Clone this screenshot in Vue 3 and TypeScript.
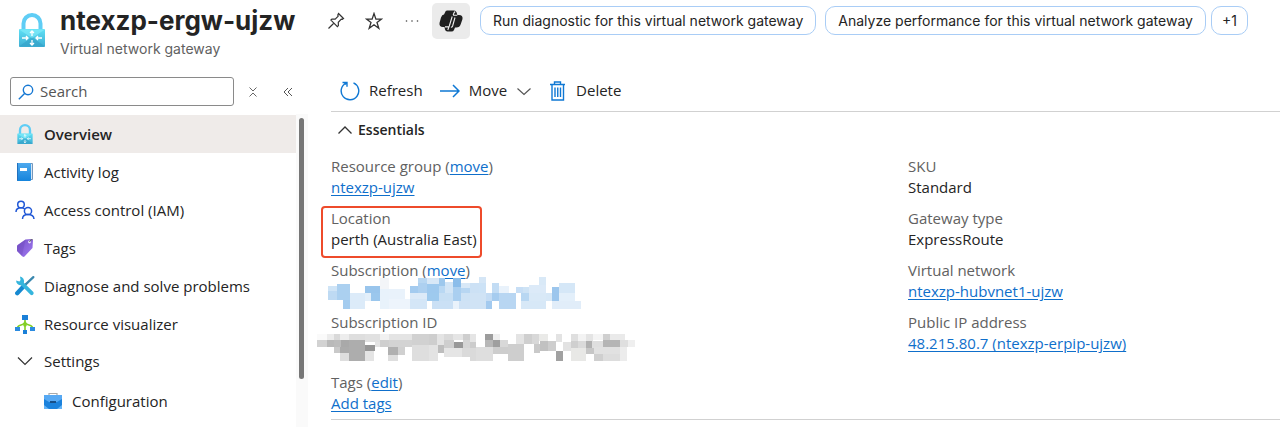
<script setup lang="ts">
import { ref } from 'vue'

type IconName = 'lock' | 'log' | 'people' | 'tag' | 'tools' | 'tree'
type Block = [x: number, y: number, w: number, h: number, fill: string]

const query = ref('')
const navItems: { icon: IconName; label: string }[] = [
  { icon: 'lock', label: 'Overview' },
  { icon: 'log', label: 'Activity log' },
  { icon: 'people', label: 'Access control (IAM)' },
  { icon: 'tag', label: 'Tags' },
  { icon: 'tools', label: 'Diagnose and solve problems' },
  { icon: 'tree', label: 'Resource visualizer' },
]

const details: { label: string; value: string; link?: boolean }[] = [
  { label: 'SKU', value: 'Standard' },
  { label: 'Gateway type', value: 'ExpressRoute' },
  { label: 'Virtual network', value: 'ntexzp-hubvnet1-ujzw', link: true },
  { label: 'Public IP address', value: '48.215.80.7 (ntexzp-erpip-ujzw)', link: true },
]

// Redaction mosaics, three units per pixel
const blueBlocks: Block[] = [
  [54, 78, 28, 15, '#cfe4f6'], [54, 93, 28, 27, '#bedaf3'], [82, 72, 38, 48, '#abd0f0'], [99, 120, 21, 27, '#a4ccef'],
  [120, 99, 46, 48, '#dcebf9'], [165, 78, 45, 21, '#99c5ec'], [182, 99, 28, 24, '#9bc7ed'], [165, 99, 17, 24, '#e3effa'],
  [210, 54, 27, 33, '#f3f5f8'], [210, 87, 27, 60, '#e8f2fb'], [237, 87, 47, 30, '#e9f2fb'], [237, 117, 63, 30, '#edf4fc'],
  [300, 78, 24, 21, '#a4cbef'], [324, 54, 27, 16, '#b8d7f2'], [324, 70, 27, 29, '#add0f0'], [351, 54, 36, 18, '#d8e8f7'],
  [351, 72, 36, 27, '#9ec9ee'], [387, 54, 18, 24, '#9dc8ed'], [387, 78, 18, 21, '#b9d8f3'], [405, 66, 24, 33, '#d2e5f6'],
  [429, 54, 24, 27, '#8bbdea'], [429, 81, 24, 42, '#aacff0'], [453, 69, 27, 15, '#d8e8f7'], [453, 84, 27, 15, '#b7d6f2'],
  [300, 99, 66, 18, '#dceaf8'], [300, 117, 51, 30, '#d4e6f7'], [351, 99, 36, 24, '#9ecaee'], [366, 123, 63, 24, '#cae0f5'],
  [387, 99, 42, 24, '#c7dff4'], [429, 123, 18, 24, '#e9f2fb'], [447, 123, 33, 24, '#cfe2f5'], [453, 99, 27, 24, '#cde2f5'],
  [480, 69, 27, 30, '#cce1f5'], [507, 51, 21, 18, '#d5e6f6'], [507, 69, 21, 30, '#cce2f6'], [480, 99, 48, 48, '#d0e3f5'],
  [528, 99, 18, 24, '#c4dcf4'], [546, 69, 21, 30, '#c2dcf4'], [546, 99, 21, 24, '#a6ccef'], [528, 123, 18, 24, '#a3caef'],
  [567, 78, 30, 21, '#e9f2fb'], [567, 99, 51, 48, '#b8d6f2'], [618, 81, 21, 18, '#c7def5'], [639, 81, 18, 18, '#cee3f5'],
  [633, 99, 24, 24, '#b8d7f2'], [657, 75, 51, 24, '#dceaf8'], [687, 51, 21, 24, '#d9e9f7'], [657, 99, 51, 24, '#d9e9f7'],
  [633, 123, 75, 24, '#d7e8f7'], [708, 99, 18, 24, '#d7e8f7'], [726, 81, 21, 45, '#9cc6ed'], [747, 69, 48, 30, '#d5e7f7'],
  [747, 99, 48, 24, '#e3effa'], [726, 123, 87, 24, '#e1edf9'],
]

const grayBlocks: Block[] = [
  [21, 222, 30, 18, '#fafafa'], [51, 222, 21, 18, '#ececec'], [72, 222, 18, 18, '#d9d9d9'], [90, 222, 27, 18, '#ededed'],
  [117, 222, 48, 18, '#dedede'], [165, 222, 45, 24, '#e1e1e1'], [210, 222, 27, 18, '#f1f1f1'], [237, 222, 69, 18, '#e4e4e4'],
  [306, 222, 51, 33, '#d1d1d1'], [357, 222, 24, 33, '#cecece'], [381, 222, 21, 33, '#e4e4e4'], [402, 222, 27, 18, '#dadada'],
  [429, 222, 30, 18, '#e5e5e5'], [459, 222, 21, 18, '#cecece'], [480, 222, 18, 24, '#e5e5e5'],
  [21, 240, 30, 21, '#d2d2d2'], [51, 240, 21, 21, '#b9b9b9'], [72, 240, 21, 21, '#bcbcbc'], [93, 240, 24, 21, '#a9a9a9'],
  [117, 240, 48, 63, '#adadad'], [72, 261, 18, 18, '#c9c9c9'], [90, 261, 27, 18, '#ababab'], [90, 279, 27, 24, '#dedede'],
  [165, 255, 30, 18, '#969696'], [165, 273, 27, 30, '#e4e4e4'], [195, 246, 27, 15, '#e4e4e4'], [210, 240, 27, 21, '#cfcfcf'],
  [237, 240, 69, 21, '#d3d3d3'], [234, 261, 30, 24, '#b0b0b0'], [264, 261, 21, 24, '#d0d0d0'], [234, 285, 30, 18, '#dedede'],
  [306, 255, 51, 48, '#dedede'], [357, 255, 27, 48, '#e3e3e3'], [384, 255, 18, 24, '#bdbdbd'], [402, 240, 30, 24, '#cecece'],
  [432, 246, 27, 18, '#989898'], [459, 240, 21, 24, '#d5d5d5'], [402, 264, 54, 27, '#e5e5e5'], [456, 264, 24, 27, '#dadada'],
  [480, 246, 18, 18, '#cccccc'], [480, 264, 18, 39, '#dadada'], [498, 261, 51, 42, '#dedede'],
  [525, 222, 24, 18, '#9c9c9c'], [549, 222, 21, 18, '#efefef'], [525, 240, 24, 21, '#b7b7b7'], [549, 240, 21, 21, '#9f9f9f'],
  [570, 240, 24, 21, '#d8d8d8'], [549, 261, 45, 21, '#cdcdcd'], [594, 252, 48, 51, '#cecece'], [618, 222, 24, 30, '#e4e4e4'],
  [642, 222, 24, 30, '#cfcfcf'], [666, 222, 21, 30, '#d8d8d8'], [687, 222, 27, 21, '#eaeae8'], [672, 252, 18, 27, '#c9c9c9'],
  [690, 243, 24, 30, '#c1c1c1'], [714, 243, 24, 30, '#cdcdcd'], [738, 222, 18, 24, '#e3e3e3'], [738, 273, 21, 30, '#a1a1a1'],
  [759, 246, 24, 27, '#e2e2e2'], [783, 222, 21, 21, '#dfdfdf'], [804, 222, 24, 21, '#f3f3f3'], [828, 222, 21, 21, '#e4e4e4'],
  [849, 222, 30, 18, '#f4f4f4'], [783, 243, 21, 21, '#cfcfcf'], [804, 243, 24, 21, '#dadada'], [828, 243, 18, 21, '#b1b1b1'],
  [846, 243, 33, 21, '#dfdfdf'], [783, 264, 45, 39, '#e8e8e6'], [828, 264, 24, 18, '#c6c6c6'], [879, 222, 21, 18, '#cfcfcf'],
  [900, 222, 45, 18, '#eaeaea'], [879, 240, 51, 21, '#b5b5b5'], [930, 240, 24, 21, '#dfdfdf'], [954, 240, 21, 21, '#efefef'],
  [852, 261, 78, 21, '#e1e1e1'], [852, 282, 27, 21, '#cfcfcf'], [879, 282, 51, 21, '#dddddd'], [930, 261, 21, 42, '#ececec'],
]
</script>

<template>
  <div class="page">
    <svg class="defs" width="0" height="0" aria-hidden="true">
      <defs>
        <linearGradient id="lockBody" x1="0" y1="0" x2="0" y2="1"><stop offset="0" stop-color="#5fe0f5" /><stop offset="1" stop-color="#3faed3" /></linearGradient>
        <linearGradient id="bookBody" x1="0" y1="0" x2="0" y2="1"><stop offset="0" stop-color="#4da9ee" /><stop offset="1" stop-color="#1584dc" /></linearGradient>
        <linearGradient id="tagBody" x1="0" y1="0" x2="1" y2="1"><stop offset="0" stop-color="#7650c8" /><stop offset="1" stop-color="#a07af0" /></linearGradient>
        <symbol id="lock" viewBox="0 0 26 34">
          <path d="M4.500 17V10.500a8.500 8.500 0 0 1 17 0V17" fill="none" stroke="#5fcdf5" stroke-width="4" />
          <rect y="16" width="26" height="18" rx="1" fill="url(#lockBody)" />
          <path d="M0 33.500 13 24l13 9.500z" fill="#2e9bc4" opacity=".5" />
          <path d="M0 16.500 13 25l13-8.500z" fill="#8aeefc" opacity=".55" />
          <path d="M13 18v5M11 20l2-2 2 2M13 32v-5M11 30l2 2 2-2M3 25h6M7 23l2 2-2 2M23 25h-6M19 23l-2 2 2 2" fill="none" stroke="#fff" stroke-width="1.300" />
        </symbol>
        <symbol id="log" viewBox="0 0 18 20">
          <path d="M3 1.500h13.500v16H3z" fill="#d6e6f5" stroke="#7597bb" stroke-width="1" />
          <rect x="1" y="1" width="14" height="18" rx="1" fill="url(#bookBody)" />
          <path d="M1 1h1v18q-1 0-1-1z" fill="#2270bd" />
          <rect x="4" y="6" width="7" height="3" fill="#fff" />
        </symbol>
        <symbol id="people" viewBox="0 0 20 20">
          <g fill="none" stroke="#2158d6" stroke-width="1.500">
            <circle cx="6" cy="4.500" r="3.300" /><path d="M1 12c0-3 2-4.300 5-4.300 1.800 0 3 .5 4 1.600" />
            <circle cx="13" cy="11" r="3.600" /><path d="M7.500 19c0-3 2.500-4.400 5.500-4.400s5.700 1.400 6 4.400" />
          </g>
        </symbol>
        <symbol id="tag" viewBox="0 0 18 20">
          <path d="M9.500 1.500 16 1l1 1-.5 8-8 8.500q-1 .8-2 0L1 13V8.500q0-1 1-1.700z" fill="url(#tagBody)" />
          <path d="m9.500 1.500-8.500 6V13l5 5z" fill="#6945b8" opacity=".35" /><circle cx="13.500" cy="4" r="1.400" fill="#e9e0ff" />
          <path d="M13.500 4q1-3 3-2.500" fill="none" stroke="#666" stroke-width="1" />
        </symbol>
        <symbol id="tools" viewBox="0 0 18 18">
          <path d="M16.500 1 7 10" stroke="#3a87ae" stroke-width="2" stroke-linecap="round" />
          <path d="m8 9-6 6.500" stroke="#1689d1" stroke-width="3.800" stroke-linecap="round" />
          <path d="M1 4 4 5 5 3.500 4.500.500A4.200 4.200 0 0 1 8 6l8.500 8.500q.8 1.200-.2 2.200t-2.300.2L5.500 8.300A4.200 4.200 0 0 1 1 4z" fill="#35b5dd" />
        </symbol>
        <symbol id="tree" viewBox="0 0 20 20">
          <path d="M10 4v12M10 7q0 3-4 4t-3.500 4M10 7q0 3 4 4t3.500 4" fill="none" stroke="#83cf24" stroke-width="1.600" />
          <rect x="7" y="1" width="6" height="5" fill="#1b80d8" /><rect x="0" y="13" width="5" height="4" fill="#2b8be0" />
          <rect x="15" y="13" width="5" height="4" fill="#2b8be0" /><rect x="8" y="16" width="4" height="4" fill="#1b80d8" />
          <circle cx="10" cy="11" r="1.800" fill="#83cf24" />
        </symbol>
      </defs>
    </svg>

    <header class="header">
      <svg class="brand" width="26" height="34" aria-hidden="true"><use href="#lock" /></svg>
      <div class="titles">
        <h1>ntexzp-ergw-ujzw</h1>
        <p>Virtual network gateway</p>
      </div>
      <div class="tools">
        <button class="plain" aria-label="Pin">
          <svg width="18" height="18" viewBox="0 0 18 18" fill="none" stroke="#333" stroke-width="1.200"><path d="m11.500 1.500 5 5-1.200.8-1-.2-3 3.200.1 3.300-1 1-6.500-6.500 1-1 3.300.1 3-3-.4-1.200zM7 11l-5.500 5.500" /></svg>
        </button>
        <button class="plain" aria-label="Favorite">
          <svg width="18" height="18" viewBox="0 0 18 18" fill="none" stroke="#333" stroke-width="1.300"><path d="m9 1.500 1.900 5.600h5.700L12 10.500l1.800 5.700L9 12.700l-4.800 3.500L6 10.500 1.400 7.100h5.700z" /></svg>
        </button>
        <button class="plain" aria-label="More">
          <svg width="18" height="18" viewBox="0 0 18 18" fill="#444"><circle cx="3.500" cy="9" r=".8" /><circle cx="9" cy="9" r=".8" /><circle cx="14.500" cy="9" r=".8" /></svg>
        </button>
      </div>
      <button class="copilot" aria-label="Copilot">
        <svg width="24" height="22" viewBox="0 0 24 22">
          <path d="M8 .5h7q2 0 2.600 2l.7 2.500H20q4 0 3.500 4l-1.700 5q-1 3.500-4.500 3.500H16l-1 2.500q-.7 1.500-2.500 1.500H8.500q-2 0-2.500-2L5.500 17H4Q0 17 .5 13L2 7.500Q3 4.500 5 4.500l1-2Q6.500.5 8 .5z" fill="#202020" />
          <path d="M14 5.200h4.300M6 16.900h4.300M13.200 6.500 10.300 16q-.4 1-1.500 4M16.200 1.500q-1.500 1-2 3.700M16 7.500l-2.400 8.500q-.4 1.300-1.700 1.300" fill="none" stroke="#eee" stroke-width="1.100" />
        </svg>
      </button>
      <div class="prompts">
        <button class="pill">Run diagnostic for this virtual network gateway</button>
        <button class="pill second">Analyze performance for this virtual network gateway</button>
        <button class="pill more">+1</button>
      </div>
    </header>

    <div class="body">
      <aside class="side">
        <div class="search-row">
          <label class="search">
            <svg width="16" height="16" viewBox="0 0 16 16" fill="none" stroke="#1678d3" stroke-width="1.400" aria-hidden="true"><circle cx="10" cy="6" r="4.700" /><path d="m6.600 9.400-5.800 5.800" /></svg>
            <input v-model="query" type="text" placeholder="Search" aria-label="Search" />
          </label>
          <button class="plain" aria-label="Collapse all"><svg width="10" height="12" viewBox="0 0 10 12" fill="none" stroke="#666" stroke-width="1"><path d="m1.500 1.500 3.500 3.500 3.500-3.500M1.500 10.500 5 7l3.500 3.500" /></svg></button>
          <button class="plain" aria-label="Hide menu"><svg width="10" height="10" viewBox="0 0 10 10" fill="none" stroke="#555" stroke-width="1"><path d="M5 1 1 5l4 4M9 1 5 5l4 4" /></svg></button>
        </div>
        <div class="scroller">
          <nav class="nav">
            <a v-for="(item, i) in navItems" :key="item.label" href="#" :class="['item', { active: i === 0 }]">
              <svg width="20" height="20" aria-hidden="true"><use :href="'#' + item.icon" width="20" height="20" /></svg>
              <span>{{ item.label }}</span>
            </a>
            <button class="item group" aria-expanded="true">
              <svg width="20" height="20" viewBox="0 0 20 20" fill="none" stroke="#333" stroke-width="1.200" aria-hidden="true"><path d="m3 6.500 7 7 7-7" /></svg>
              <span>Settings</span>
            </button>
            <a href="#" class="item child">
              <svg width="20" height="20" viewBox="0 0 20 20" aria-hidden="true">
                <path d="M6 5V2.500h8V5" fill="none" stroke="#aaa" stroke-width="1.200" />
                <rect x="1" y="4" width="18" height="14" rx="1" fill="#1b82dc" />
                <path d="M1 4h18v4l-5 3H6L1 8z" fill="#57a9f3" /><path d="m1 14 5 4H1zM19 14l-5 4h5z" fill="#64b4f7" /><rect x="7" y="10" width="6" height="2" fill="#174f88" />
              </svg>
              <span>Configuration</span>
            </a>
          </nav>
          <div class="track"><div class="thumb"></div></div>
        </div>
      </aside>

      <main class="main">
        <div class="commands">
          <button class="command">
            <svg width="20" height="20" viewBox="0 0 20 20" fill="none" stroke="#0f78d4" stroke-width="1.400" aria-hidden="true"><path d="M13.500 1.900a8.800 8.800 0 1 1-7.500.2M2.500 1.500H7v4.300M7 1.500 5 3.500" /></svg>
            Refresh
          </button>
          <button class="command move">
            <svg width="20" height="20" viewBox="0 0 20 20" fill="none" stroke="#0f78d4" stroke-width="1.500" aria-hidden="true"><path d="M0 10h19M13 4l6 6-6 6" /></svg>
            Move
            <svg width="16" height="16" viewBox="0 0 16 16" fill="none" stroke="#555" stroke-width="1.200" aria-hidden="true"><path d="m1.500 5.500 6.500 6 6.500-6" /></svg>
          </button>
          <button class="command">
            <svg width="18" height="20" viewBox="0 0 18 20" fill="none" stroke="#0f78d4" stroke-width="1.400" aria-hidden="true"><path d="M1 3.500h15M5.500 3.500V1h6v2.500M3 3.500V19h11.500V3.500M6 6.500v9.500M8.750 6.500v9.500M11.500 6.500v9.500" /></svg>
            Delete
          </button>
        </div>

        <section class="essentials">
          <button class="toggle" aria-expanded="true">
            <svg width="16" height="16" viewBox="0 0 16 16" fill="none" stroke="#333" stroke-width="1.300" aria-hidden="true"><path d="M1.500 11.500 8 5l6.500 6.500" /></svg>
            Essentials
          </button>
          <div class="columns">
            <dl>
              <div class="pair">
                <dt>Resource group (<a href="#">move</a>)</dt>
                <dd><a href="#">ntexzp-ujzw</a></dd>
              </div>
              <div class="pair marked">
                <dt>Location</dt>
                <dd>perth (Australia East)</dd>
              </div>
              <div class="pair">
                <dt>Subscription (<a href="#">move</a>)</dt>
                <dd class="redacted">
                  <svg class="blue" width="254" height="32" viewBox="54 51 762 96" shape-rendering="crispEdges" aria-hidden="true">
                    <rect v-for="(b, i) in blueBlocks" :key="i" :x="b[0]" :y="b[1]" :width="b[2]" :height="b[3]" :fill="b[4]" />
                  </svg>
                </dd>
              </div>
              <div class="pair">
                <dt>Subscription ID</dt>
                <dd class="redacted">
                  <svg class="gray" width="318" height="27" viewBox="21 222 954 81" shape-rendering="crispEdges" aria-hidden="true">
                    <rect v-for="(b, i) in grayBlocks" :key="i" :x="b[0]" :y="b[1]" :width="b[2]" :height="b[3]" :fill="b[4]" />
                  </svg>
                </dd>
              </div>
              <div class="pair tags">
                <dt>Tags (<a href="#">edit</a>)</dt>
                <dd><a href="#">Add tags</a></dd>
              </div>
            </dl>
            <dl>
              <div v-for="d in details" :key="d.label" class="pair">
                <dt>{{ d.label }}</dt>
                <dd><a v-if="d.link" href="#">{{ d.value }}</a><template v-else>{{ d.value }}</template></dd>
              </div>
            </dl>
          </div>
        </section>
      </main>
    </div>
  </div>
</template>

<style>
body { background: #fff; }
</style>

<style scoped>
* { box-sizing: border-box; }
.page { font-family: "Open Sans", "Noto Sans", sans-serif; font-size: 15px; line-height: 21px; color: #242424; background: #fff; overflow: hidden; }
.defs { position: absolute; }
button { font: inherit; color: inherit; background: none; border: 0; padding: 0; margin: 0; white-space: nowrap; }
button svg { display: block; }
svg { flex: none; }

.header { display: flex; align-items: flex-start; height: 77px; padding-left: 19px; font-family: Inter, "Liberation Sans", sans-serif; }
.brand { margin-top: 13px; }
.titles { margin-left: 15px; width: 267px; white-space: nowrap; }
h1 { margin: 4px 0 0; font-size: 26px; line-height: 34px; font-weight: 700; }
.titles p { margin: 0; font-size: 14px; line-height: 21px; color: #616161; }
.tools { display: flex; gap: 20px; margin-top: 12px; }
.copilot { display: flex; align-items: center; justify-content: center; width: 38px; height: 36px; margin: 3px 0 0 11px; border-radius: 5px; background: #ebebeb; }
.prompts { display: flex; margin: 6px 0 0 10px; }
.pill { height: 29px; padding: 0 12px; border: 1px solid #a9cdf6; border-radius: 10px; font-size: 14px; }
.second { margin-left: 9px; }
.more { margin-left: 5px; padding: 0 10px; }

.body { display: flex; }
.side { width: 308px; flex: none; }
.search-row { display: flex; align-items: center; height: 29px; padding-left: 10px; }
.search-row .plain { margin-left: 14px; }
.search-row .plain + .plain { margin-left: 25px; }
.search { display: flex; align-items: center; gap: 6px; width: 224px; height: 29px; padding-left: 7px; border: 1px solid #8a8a8a; border-radius: 3px; }
.search input { flex: 1; min-width: 0; border: 0; outline: 0; padding: 0; background: none; font: inherit; color: #333; }
.search input::placeholder { color: #555; opacity: 1; }
.scroller { display: flex; margin-top: 8px; height: 313px; }
.nav { flex: 1; padding-top: 1px; }
.item { display: flex; align-items: center; gap: 9px; width: 100%; height: 38px; padding-left: 15px; color: #242424; text-decoration: none; }
.active { background: #efebe9; font-weight: 600; }
.group { height: 36px; }
.child { height: 44px; padding-left: 43px; }
.track { width: 12px; padding: 4px 3px; background: #fafafa; }
.thumb { width: 5px; height: 261px; border-radius: 3px; background: #777; }

.main { flex: 1; min-width: 0; padding-left: 23px; }
.commands { display: flex; align-items: center; height: 35px; padding: 0 0 7px 9px; border-bottom: 1px solid #d1d1d1; }
.command { display: flex; align-items: center; gap: 9px; margin-right: 17px; }
.essentials { border-bottom: 1px solid #d1d1d1; padding-bottom: 5px; }
.toggle { display: flex; align-items: center; gap: 5px; height: 35px; padding-left: 6px; font-size: 14px; font-weight: 600; }
.columns { display: grid; grid-template-columns: 577px 1fr; padding-top: 9px; }
dl { display: flex; flex-direction: column; gap: 10px; margin: 0; }
.pair { position: relative; }
dt { color: #616161; }
dd { margin: 0; min-height: 21px; }
dl a { color: #0f6fcb; text-decoration: underline; text-underline-offset: 2px; }
.marked::after { content: ""; box-sizing: border-box; position: absolute; left: -10px; top: -2px; width: 161px; height: 52px; border: 2px solid #ee4b2b; border-radius: 4px; }
.redacted { position: relative; }
.redacted svg { position: absolute; }
.blue { left: -3px; top: -4px; }
.gray { left: -14px; top: 1px; }
.tags { margin-top: 8px; }
</style>
